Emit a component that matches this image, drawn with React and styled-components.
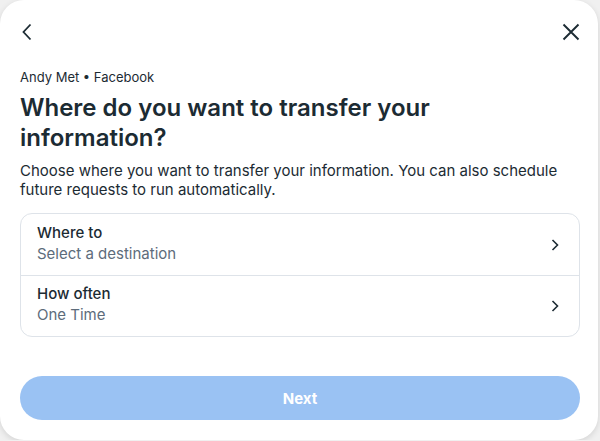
import React from "react";
import styled, { createGlobalStyle } from "styled-components";

const Global = createGlobalStyle`
  html, body { margin: 0; padding: 0; background: #f0f0f0; }
  body { font-family: Inter, "Noto Sans", sans-serif; -webkit-font-smoothing: antialiased; }
  * { box-sizing: border-box; }
`;

const Card = styled.div`
  width: 598px;
  height: 440px;
  background: #fff;
  border-radius: 24px;
  box-shadow: 0 2px 6px rgba(0, 0, 0, 0.12);
  padding: 0 18px 0 20px;
  display: flex;
  flex-direction: column;
`;

const Header = styled.div`
  height: 62px;
  display: flex;
  align-items: center;
  justify-content: space-between;
`;

const IconButton = styled.button`
  border: 0;
  background: none;
  padding: 0;
  width: 24px;
  height: 24px;
  display: flex;
  align-items: center;
  justify-content: ${(p) => (p.$end ? "flex-end" : "flex-start")};
  color: #1c2b33;
  margin-top: 2px;
`;

const Meta = styled.div`
  font-size: 13px;
  line-height: 16px;
  color: #1c2b33;
  margin-top: 7px;
`;

const Title = styled.h1`
  margin: 8px 0 0;
  font-size: 24px;
  line-height: 30px;
  font-weight: 600;
  color: #1c2b33;
`;

const Desc = styled.p`
  margin: 8px 0 0;
  font-size: 15px;
  line-height: 19px;
  color: #1c2b33;
`;

const List = styled.div`
  margin-top: 14px;
  border: 1px solid #dee3e9;
  border-radius: 12px;
  overflow: hidden;
`;

const Row = styled.div`
  height: 61px;
  display: flex;
  align-items: center;
  padding: 0 20px 4px 16px;
  border-top: ${(p) => (p.$first ? "0" : "1px solid #dee3e9")};
`;

const RowText = styled.div`
  flex: 1;
  display: flex;
  flex-direction: column;
`;

const Label = styled.div`
  font-size: 15px;
  line-height: 21px;
  font-weight: 500;
  color: #1c2b33;
`;

const Value = styled.div`
  font-size: 15px;
  line-height: 21px;
  color: #5d6c7b;
`;

const Chevron = styled.span`
  display: flex;
  color: #1c2b33;
  margin-top: 4px;
`;

const Spacer = styled.div`
  flex: 1;
`;

const NextButton = styled.button`
  height: 44px;
  margin-bottom: 20px;
  border: 0;
  border-radius: 22px;
  background: #9ac2f3;
  color: #fff;
  font-family: inherit;
  font-size: 15px;
  font-weight: 700;
  width: 100%;
`;

const Back = () => (
  <svg width="14" height="18" viewBox="0 0 14 18" fill="none">
    <path d="M10.5 1.5 L3.5 9 L10.5 16.5" stroke="currentColor" strokeWidth="1.8" />
  </svg>
);

const Close = () => (
  <svg width="18" height="18" viewBox="0 0 18 18" fill="none">
    <path d="M1.5 1.5 L16.5 16.5 M16.5 1.5 L1.5 16.5" stroke="currentColor" strokeWidth="1.9" />
  </svg>
);

const Chev = () => (
  <svg width="8" height="14" viewBox="0 0 8 14" fill="none">
    <path d="M1.5 2 L6.5 7 L1.5 12" stroke="currentColor" strokeWidth="1.6" />
  </svg>
);

export default function App() {
  return (
    <>
      <Global />
      <Card>
        <Header>
          <IconButton aria-label="Back">
            <Back />
          </IconButton>
          <IconButton aria-label="Close" $end>
            <Close />
          </IconButton>
        </Header>
        <Meta>Andy Met • Facebook</Meta>
        <Title>Where do you want to transfer your information?</Title>
        <Desc>
          Choose where you want to transfer your information. You can also schedule future
          requests to run automatically.
        </Desc>
        <List>
          <Row $first>
            <RowText>
              <Label>Where to</Label>
              <Value>Select a destination</Value>
            </RowText>
            <Chevron>
              <Chev />
            </Chevron>
          </Row>
          <Row>
            <RowText>
              <Label>How often</Label>
              <Value>One Time</Value>
            </RowText>
            <Chevron>
              <Chev />
            </Chevron>
          </Row>
        </List>
        <Spacer />
        <NextButton>Next</NextButton>
      </Card>
    </>
  );
}
